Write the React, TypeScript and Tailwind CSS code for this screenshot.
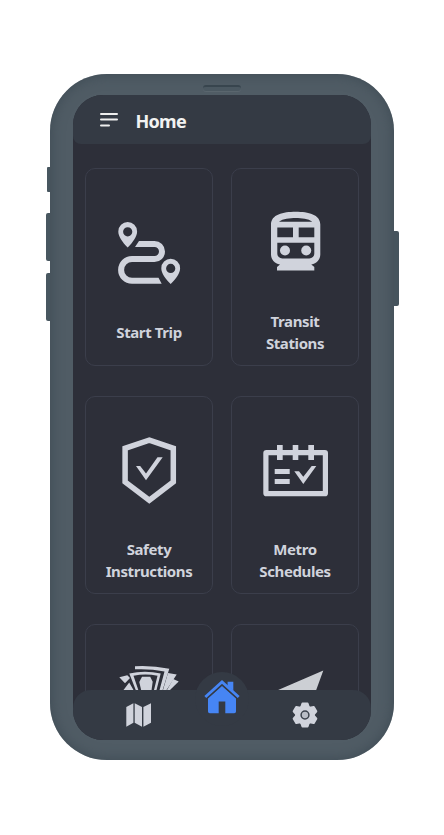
import type { ReactNode } from 'react';

const ink = '#d0d3dc';

function RouteIcon() {
  return (
    <svg viewBox="109 213 80 80" className="size-20 shrink-0" fill={ink}>
      <path fillRule="evenodd" d="M127.7 222a9.4 9.4 0 0 0-9.4 9.4c0 5 4 10.5 9.4 16 5.4-5.5 9.4-11 9.4-16a9.4 9.4 0 0 0-9.4-9.4Zm0 5.2a4.600 4.600 0 1 1 0 9.2 4.600 4.600 0 0 1 0-9.2Z" />
      <path fillRule="evenodd" d="M170.7 258.8a9.4 9.4 0 0 0-9.4 9.4c0 5 4 10.3 9.4 15.7 5.4-5.4 9.4-10.7 9.4-15.700a9.4 9.4 0 0 0-9.4-9.4Zm0 5a4.600 4.600 0 1 1 0 9.2 4.600 4.600 0 0 1 0-9.2Z" />
      <path d="M139 241h15.500a10.500 10.500 0 0 1 0 21H132a7.900 7.900 0 0 0 0 15.800h26.500l3.200 6H132a13.900 13.900 0 0 1 0-27.800h22.500a4.500 4.500 0 0 0 0-9H135Z" />
    </svg>
  );
}

function TrainIcon() {
  return (
    <svg viewBox="255 201.500 80 80" className="size-20 shrink-0" fill={ink}>
      <path fillRule="evenodd" d="M271 224c0-10 12-12.800 24.700-12.800S320.300 214 320.300 224v30c0 5-3.500 9-9 10l3 2.500v3.500H277v-3.500l3-2.500c-5.500-1-9-5-9-10ZM279 221.300h33.300c-4-3-10.500-3.700-16.600-3.700s-12.700.7-16.700 3.700ZM277.300 227v9.700H293V227ZM298.700 227v9.700h15.600V227ZM277.300 242.300V253a5 5 0 0 0 5 5h27a5 5 0 0 0 5-5v-10.700Z" />
      <circle cx="285" cy="250" r="5" />
      <circle cx="306.200" cy="250" r="5" />
    </svg>
  );
}

function ShieldIcon() {
  return (
    <svg viewBox="109 430 80 80" className="size-20 shrink-0" fill={ink}>
      <path d="m149.300 440.200 24 8.100V482l-24 18.300-24.200-18.300v-33.700Z" fill="none" stroke={ink} strokeWidth="5.500" />
      <path d="M136 466h4.200l5.800 7.500 11.500-16.200h5.200L146 480.300Z" />
    </svg>
  );
}

function CalendarIcon() {
  return (
    <svg viewBox="255 430 80 80" className="size-20 shrink-0" fill={ink}>
      <rect x="265.900" y="452.600" width="59.500" height="41.100" rx="0.500" fill="none" stroke={ink} strokeWidth="5.200" strokeLinejoin="round" />
      <path d="M277 445h5.700v15H277ZM292.700 445h5.600v15h-5.600ZM308.300 445h5.700v15h-5.700ZM274.700 469h15v5h-15ZM274.700 479h15v5h-15ZM294.300 471.300h4.700l4.300 5.400 8.400-10.700h4.600l-13 18Z" />
    </svg>
  );
}

function MoneyIcon() {
  return (
    <svg viewBox="109 658 80 80" className="size-20 shrink-0" fill={ink}>
      <path d="M135 666.200q17-1 34.300 2.500L162 692h-3l5.500-20.500Q150 668.500 135 669.300Z" />
      <path fillRule="evenodd" d="M129.300 673.500q15.500-3.500 31.400 0L156 692h-19.500Zm4.200 2.300L139 692h14.500l4-16.200q-12-2.600-24 0Z" />
      <path d="M142 676.800h8.200l2.500 5-1.200 8.500h-10.300l-1.900-8.300Z" />
      <path d="m119.300 677.300 8-2 2.700 2.700-5 5.300ZM123.500 690l5.700-7.500 4.300 7.500ZM168 673l8.700 1.600L166.500 690H163Z" />
      <path d="m173.200 679 5.500 2.500L170 690h-3Z" />
    </svg>
  );
}

function PlaneIcon() {
  return (
    <svg viewBox="255 658 80 80" className="size-20 shrink-0" fill="#cccfd4">
      <path d="m323.300 670.500-53.300 23 24 5 12 19.500Z" />
    </svg>
  );
}

function HomeIcon() {
  return (
    <svg viewBox="204 680 36 34" className="h-[34px] w-9" fill="#4685f4">
      <path d="m222 686 14 12.500v13a1.800 1.800 0 0 1-1.800 1.800h-8.900V701.500h-6.600v11.800h-8.900a1.800 1.800 0 0 1-1.800-1.800v-13Z" />
      <path d="m205.300 697.300 16.700-15 16.700 15" fill="none" stroke="#343a44" strokeWidth="4.600" />
      <path d="M227.600 681.700h5.700v9l-5.700-5Z" />
      <path d="m205.300 697 16.700-15 16.700 15" fill="none" stroke="#4685f4" strokeWidth="2.800" />
    </svg>
  );
}

function MapIcon() {
  return (
    <svg viewBox="125 701 28 28" className="size-7" fill={ink}>
      <path d="m126.300 707 7.100-3.800v19.600l-7.100 3.900ZM134.700 703.200l7.300 3.800v19.700l-7.300-3.900ZM143.400 707l7.600-3.800v19.600l-7.600 3.900Z" />
    </svg>
  );
}

function GearIcon() {
  return (
    <svg viewBox="-15 -15 30 30" className="size-[30px]" fill={ink}>
      <circle r="9.800" />
      {[0, 60, 120].map((angle) => (
        <path key={angle} transform={`rotate(${angle})`} d="M-2.500-12.600h5a1 1 0 0 1 1 .8L4.800-8V8l-1.300 3.800a1 1 0 0 1-1 .8h-5a1 1 0 0 1-1-.8L-4.800 8V-8l1.300-3.800a1 1 0 0 1 1-.8Z" />
      ))}
      <circle r="3.900" fill="#b9bdc6" stroke="#3b424c" strokeWidth="1.500" />
    </svg>
  );
}

function Card({ icon, children }: { icon: ReactNode; children?: ReactNode }) {
  return (
    <div className="flex h-[198px] flex-col items-center justify-center gap-[29px] rounded-[10px] border border-[#3b3e4b] pt-[22px] text-center text-[15px] leading-[21.500px] font-bold tracking-[-0.4px] text-[#d0d3dc]">
      {icon}
      {children ? <div>{children}</div> : <div className="h-[43px]" />}
    </div>
  );
}

export default function App() {
  return (
    <div className="flex h-[835px] w-[444px] justify-center bg-white pt-[74px] font-['Noto_Sans',sans-serif]">
      <div className="relative h-[686px] w-[344px] rounded-[57px] bg-[#505c65] px-[23px] pt-[21px] shadow-[inset_0_0_14px_0_#3d4a53]">
        <div className="absolute top-[93px] -left-[3px] h-[25px] w-[3px] rounded-l-[1px] bg-[#485760]" />
        <div className="absolute top-[139px] -left-[4px] h-[48px] w-1 rounded-l-[2px] bg-[#485760]" />
        <div className="absolute top-[199px] -left-[4px] h-[48px] w-1 rounded-l-[2px] bg-[#485760]" />
        <div className="absolute top-[157px] -right-[5px] h-[75px] w-[5px] rounded-r-[2px] bg-[#46545d]" />
        <div className="absolute top-[11px] left-[153px] h-[6px] w-[38px] rounded-full border-t-2 border-[#38454e] bg-[#4b5861] shadow-[0_1px_0_#5a666e]" />
        <div className="relative flex h-[645px] w-[298px] flex-col overflow-hidden rounded-[30px] bg-[#2d2f39]">
          <header className="flex h-[49px] shrink-0 items-center rounded-b-[8px] bg-[#343a44] pl-[27px]">
            <svg viewBox="0 0 18 16" className="h-4 w-[18px]" stroke="#eeeeee" strokeWidth="2" strokeLinecap="round">
              <path d="M1 2h16M1 7.500h16M1 13.500h8" />
            </svg>
            <h1 className="ml-[17.500px] pt-[3px] text-[18px] leading-6 font-bold tracking-[-0.7px] text-[#f2f2f2]">Home</h1>
          </header>
          <main className="grid shrink-0 grid-cols-2 gap-x-[18px] gap-y-[30px] px-3 pt-6">
            <Card icon={<RouteIcon />}>Start Trip</Card>
            <Card icon={<TrainIcon />}>Transit<br />Stations</Card>
            <Card icon={<ShieldIcon />}>Safety<br />Instructions</Card>
            <Card icon={<CalendarIcon />}>Metro<br />Schedules</Card>
            <Card icon={<MoneyIcon />} />
            <Card icon={<PlaneIcon />} />
          </main>
          <nav className="absolute inset-x-0 bottom-0 h-[50px] rounded-t-[18px] bg-[#343a44]">
            <div className="absolute -top-[18px] left-1/2 size-[54px] -translate-x-1/2 rounded-full bg-[#343a44]" />
            <div className="relative flex h-full items-center">
              <div className="ml-[52px]"><MapIcon /></div>
              <div className="mb-[36px] ml-[51px]"><HomeIcon /></div>
              <div className="ml-[50px]"><GearIcon /></div>
            </div>
          </nav>
        </div>
      </div>
    </div>
  );
}
